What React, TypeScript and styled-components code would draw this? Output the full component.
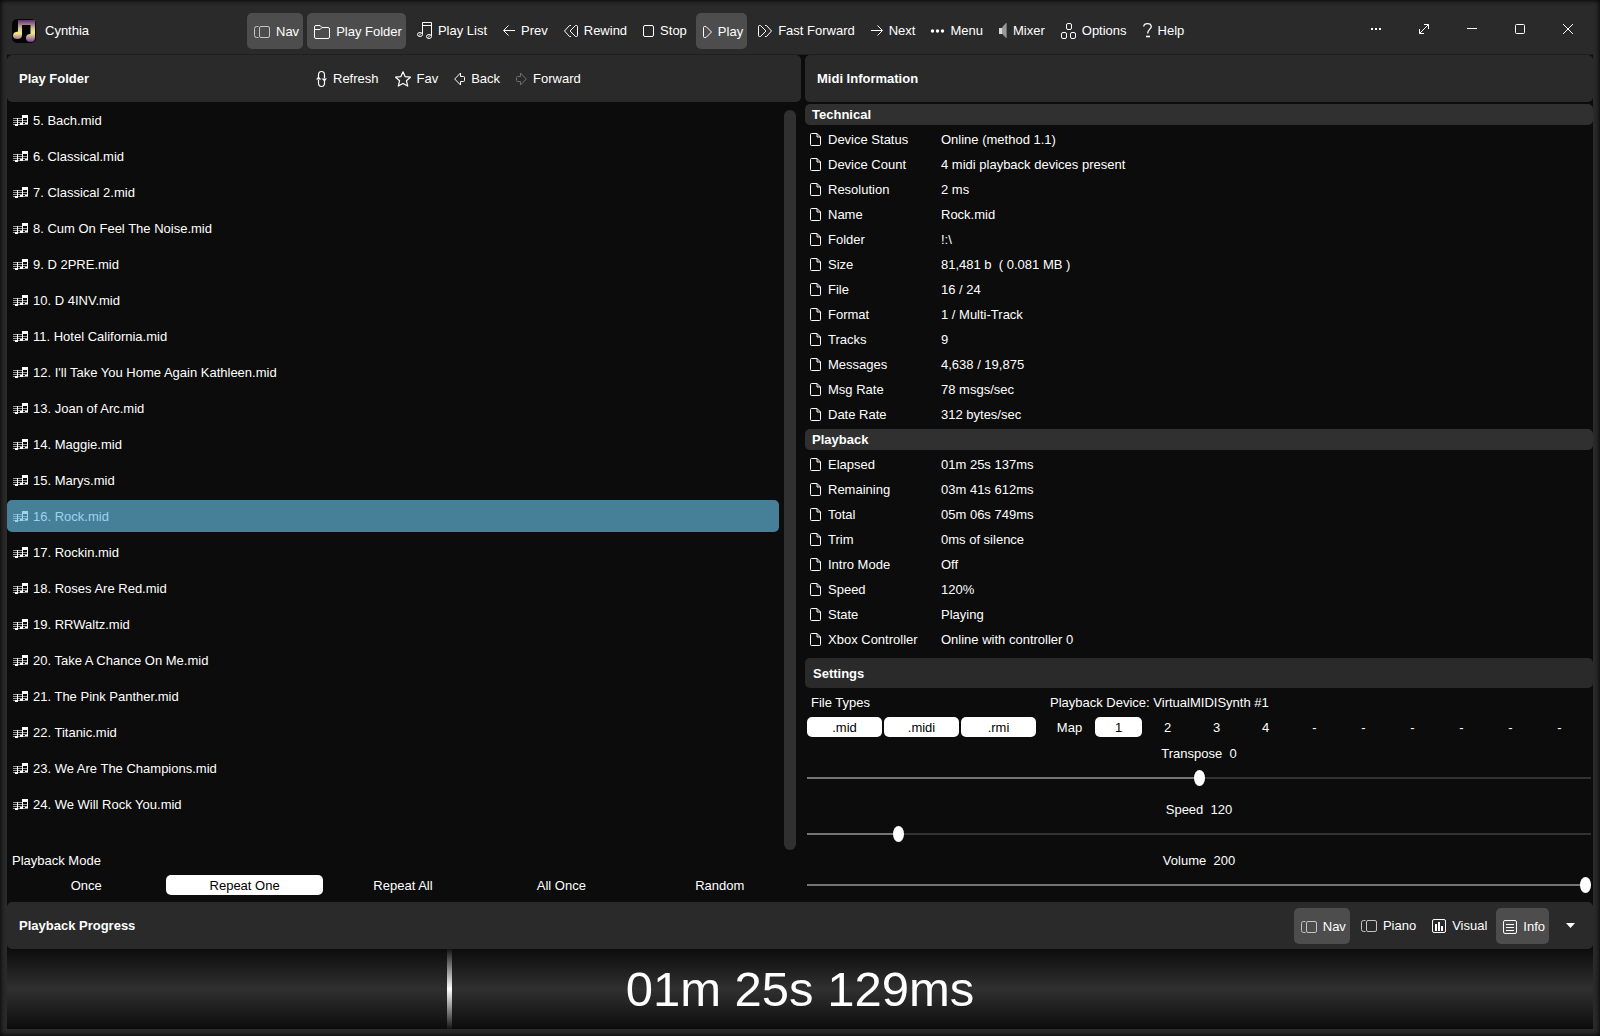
import React, { useState } from "react";
import styled, { createGlobalStyle, css } from "styled-components";

const color = {
  base: "#0c0c0c",
  panel: "#2a2a2a",
  section: "#303030",
  pressed: "#4d4d4d",
  text: "#ffffff",
  accent: "#467f98",
  accentText: "#9fd3ee",
  track: "#323232",
  trackFill: "#757575",
};

const GlobalStyle = createGlobalStyle`
  *, *::before, *::after { box-sizing: border-box; }
  body {
    margin: 0;
    background: ${color.base};
    color: ${color.text};
    font: 13px/20px "Liberation Sans", Arial, sans-serif;
  }
  button, input { font: inherit; color: inherit; }
`;

/* ---------- icons ---------- */

const Glyph = styled.svg`
  display: block;
  flex: none;
  fill: none;
  stroke: currentColor;
  stroke-width: 1;
  overflow: visible;
`;

type IconProps = { w: number; h: number; children: React.ReactNode; crisp?: boolean };
const Icon = ({ w, h, children, crisp }: IconProps) => (
  <Glyph
    width={w}
    height={h}
    viewBox={`0 0 ${w} ${h}`}
    shapeRendering={crisp ? "crispEdges" : undefined}
    aria-hidden="true"
  >
    {children}
  </Glyph>
);

const NavIcon = () => (
  <Icon w={16} h={12}>
    <g stroke="#c4c4c4">
      <path d="M4.500.5H2.500Q.5.5.5 2.500v7q0 2 2 2h2" />
      <rect x="5.500" y=".5" width="10" height="11" rx="1.500" />
    </g>
  </Icon>
);
const FolderIcon = () => (
  <Icon w={16} h={14}>
    <path d="M.5 12V2Q.5.5 2 .5h4L8 2.500h6q1.500 0 1.500 1.500v8q0 1.500-1.500 1.500H2Q.5 13.500.5 12zM.5 4.500h5.500l2-2" />
  </Icon>
);
const NoteIcon = () => (
  <Icon w={15} h={17}>
    <path d="M5.500 12V.5h9V14M5.500 3.500h9" />
    <ellipse cx="3" cy="12.500" rx="2.500" ry="2" />
    <ellipse cx="12" cy="14.500" rx="2.500" ry="2" />
    <path d="M2 13.500l2-2M11 15.500l2-2" />
  </Icon>
);
const PrevIcon = () => (
  <Icon w={12} h={11}>
    <path d="M12 5.500H1M5.500.5l-5 5 5 5" />
  </Icon>
);
const NextIcon = () => (
  <Icon w={12} h={11}>
    <path d="M0 5.500h11M6.500.5l5 5-5 5" />
  </Icon>
);
const RewindIcon = () => (
  <Icon w={14} h={12}>
    <path d="M7 .5H5.500L.5 6l5 5.500H7M11.500.5h1q1 0 1 1v9q0 1-1 1h-1L6 6z" />
  </Icon>
);
const ForwardIcon = () => (
  <Icon w={14} h={12}>
    <path d="M7 .5h1.500l5 5.500-5 5.500H7M2.500.5h-1q-1 0-1 1v9q0 1 1 1h1L8 6z" />
  </Icon>
);
const StopIcon = () => (
  <Icon w={11} h={12}>
    <rect x=".5" y=".5" width="10" height="11" rx="1.500" />
  </Icon>
);
const PlayIcon = () => (
  <Icon w={9} h={12}>
    <path d="M.5 1.500q0-1 1-1h1.500l5.500 5.500-5.500 5.500H1.500q-1 0-1-1z" />
  </Icon>
);
const DotsIcon = () => (
  <Icon w={13} h={4}>
    <g fill="currentColor" stroke="none">
      <circle cx="1.500" cy="2" r="1.700" />
      <circle cx="6.500" cy="2" r="1.700" />
      <circle cx="11.500" cy="2" r="1.700" />
    </g>
  </Icon>
);
const MixerIcon = () => (
  <Icon w={8} h={15}>
    <path d="M0 5h3v6H0z" fill="#d8d8d8" stroke="none" />
    <path d="M3 4.500L7 0v15l-4-4.500z" fill="#9a9a9a" stroke="none" />
    <path d="M7.500 0v15" stroke="#6f6f6f" />
  </Icon>
);
const OptionsIcon = () => (
  <Icon w={15} h={16}>
    <rect x="5.500" y=".5" width="5" height="6" rx="1.500" />
    <rect x=".5" y="9.500" width="5" height="6" rx="1.500" />
    <rect x="9.500" y="9.500" width="5" height="6" rx="1.500" />
  </Icon>
);
const HelpIcon = () => (
  <Icon w={9} h={15}>
    <path d="M.7 3.500Q1 .6 4.500.6T8.300 3.500C8.300 6 4.600 6.500 4.600 10.500" strokeWidth="1.300" />
    <path d="M3 13.500h4" strokeWidth="1.600" />
  </Icon>
);
const RefreshIcon = () => (
  <Icon w={11} h={16}>
    <path d="M2.500 7V4q0-3.500 3-3.500T8.500 4v3M8.500 9v3q0 3.500-3 3.500T2.500 12V9" strokeWidth="1.200" />
    <path d="M5.500 7.500H11l-2.500 3zM0 8.500h5.500l-3-3z" fill="currentColor" stroke="none" />
  </Icon>
);
const StarIcon = () => (
  <Icon w={16} h={16}>
    <path
      d="M8 .8l2.200 4.900 5.200.5-4 3.500 1.300 5.400L8 12.400l-4.700 2.700 1.300-5.400-4-3.500 5.200-.5z"
      strokeWidth="1.200"
      strokeLinejoin="round"
    />
  </Icon>
);
const BackIcon = () => (
  <Icon w={11} h={14}>
    <path d="M.7 7L6.500 1v3.500h3q1 0 1 1v3q0 1-1 1h-3V13z" />
  </Icon>
);
const FwdIcon = () => (
  <Icon w={11} h={14}>
    <path d="M10.300 7L4.500 1v3.500h-3q-1 0-1 1v3q0 1 1 1h3V13z" stroke="#6e6e6e" />
  </Icon>
);
const FileIcon = () => (
  <Icon w={11} h={13}>
    <path d="M.5 1.500q0-1 1-1H7L10.500 4v7.500q0 1-1 1h-8q-1 0-1-1zM7 .5V4h3.500" />
  </Icon>
);
const VisualIcon = () => (
  <Icon w={14} h={14}>
    <rect x=".5" y=".5" width="13" height="13" rx="1.500" />
    <path d="M3 5h2v7H3zM6 3h2v9H6zM9 7h2v5H9z" fill="currentColor" stroke="none" />
  </Icon>
);
const InfoIcon = () => (
  <Icon w={14} h={14}>
    <rect x=".5" y=".5" width="13" height="13" rx="1.500" />
    <path d="M3 4.500h8M3 7.500h8M3 10.500h8" />
  </Icon>
);
const SongIcon = () => (
  <Icon w={15} h={12} crisp>
    <g fill="currentColor" stroke="none">
      <path d="M0 3h9v1H0zM0 5h15v1H0zM0 7h15v1H0zM0 9h15v1H0z" opacity=".6" />
      <path d="M4 3h1v8H2V9h2zM9 0h6v9h-3V8h2V3h-4v7H7V8h2z" />
    </g>
  </Icon>
);

const AppLogo = () => (
  <svg width="24" height="24" viewBox="0 0 24 24" aria-hidden="true">
    <defs>
      <linearGradient id="logo" x1="0" y1="0" x2="0" y2="1">
        <stop offset="0" stopColor="#5f2d78" />
        <stop offset=".4" stopColor="#d9c99a" />
        <stop offset=".6" stopColor="#f4e98a" />
        <stop offset="1" stopColor="#7a3aa0" />
      </linearGradient>
    </defs>
    <rect width="24" height="24" rx="5" fill="#050505" />
    <path
      d="M6 1h17v17.500q0 4.500-4.500 4.500T14 19t4.500-4V6H10v10q0 4-4.500 4T1 16.500 6 12.500z"
      fill="url(#logo)"
    />
  </svg>
);

/* ---------- window frame ---------- */

const Window = styled.div`
  min-height: 100vh;
  display: flex;
  flex-direction: column;
  padding: 0 7px 7px;
  background: ${color.panel};
  box-shadow: inset 0 0 4px 1px #080808;
`;

const TitleBar = styled.header`
  display: flex;
  align-items: center;
  height: 55px;
  padding: 7px 1px 0 5px;
  border-bottom: 1px solid #1f1f1f;
`;

const Brand = styled.h1`
  display: flex;
  align-items: center;
  gap: 9px;
  width: 235px;
  margin: 0;
  font-size: 13px;
  font-weight: 400;
`;

const Tools = styled.nav`
  display: flex;
  align-items: center;
  gap: 4px;
`;

const Tool = styled.button<{ $on?: boolean }>`
  display: flex;
  align-items: center;
  gap: 6px;
  height: 36px;
  padding: 0 5px 0 7px;
  border: 0;
  border-radius: 5px;
  background: transparent;
  white-space: nowrap;
  ${(p) =>
    p.$on &&
    css`
      padding: 2px 4px 0 7px;
      background: ${color.pressed};
    `}
`;

const WindowControls = styled.div`
  display: flex;
  margin-left: auto;
`;

const ControlButton = styled.button`
  display: grid;
  place-items: center;
  width: 48px;
  height: 36px;
  padding: 0 0 4px;
  border: 0;
  background: transparent;
`;

/* ---------- panels ---------- */

const Main = styled.main`
  flex: 1;
  display: grid;
  grid-template-columns: 794fr 788fr;
  gap: 4px;
  background: ${color.base};
`;

const Panel = styled.section`
  display: flex;
  flex-direction: column;
  min-width: 0;
`;

const PanelHeader = styled.div`
  display: flex;
  align-items: center;
  height: 47px;
  padding: 0 12px;
  border-radius: 5px;
  background: ${color.panel};
`;

const PanelTitle = styled.h2<{ $wide?: boolean }>`
  width: ${(p) => (p.$wide ? "290px" : "auto")};
  margin: 0;
  font-size: 13px;
  font-weight: 700;
`;

const ListArea = styled.div`
  flex: 1;
  display: flex;
  gap: 5px;
  padding-right: 5px;
`;

const SongList = styled.ol`
  flex: 1;
  margin: 0;
  padding: 0;
  list-style: none;
`;

const SongItem = styled.li`
  padding: 2px 0;
`;

const Song = styled.button<{ $on: boolean }>`
  display: flex;
  align-items: center;
  gap: 5px;
  width: 100%;
  height: 32px;
  padding: 2px 6px 0;
  border: 0;
  border-radius: 5px;
  background: ${(p) => (p.$on ? color.accent : "transparent")};
  color: ${(p) => (p.$on ? color.accentText : color.text)};
`;

const ScrollThumb = styled.div`
  width: 12px;
  margin-top: 8px;
  border-radius: 6px;
  background: ${color.section};
`;

const Field = styled.fieldset<{ $inset?: boolean }>`
  display: flex;
  flex-direction: column;
  gap: 5px;
  min-width: 0;
  margin: 0;
  padding: ${(p) => (p.$inset ? "0 3px 7px 1px" : "0")};
  border: 0;
`;

const FieldLabel = styled.div`
  height: 20px;
  padding-left: 4px;
  line-height: 22px;
`;

const Choices = styled.div<{ $count: number; $trail?: boolean }>`
  display: grid;
  grid-template-columns: repeat(${(p) => p.$count}, minmax(0, 1fr));
  gap: 2px;
  padding-right: ${(p) => (p.$trail ? "8px" : "0")};
`;

const Choice = styled.label<{ $on: boolean }>`
  position: relative;
  height: 20px;
  border-radius: 5px;
  background: ${(p) => (p.$on ? "#fff" : "transparent")};
  color: ${(p) => (p.$on ? "#000" : color.text)};
  line-height: 22px;
  text-align: center;
`;

const ChoiceInput = styled.input`
  position: absolute;
  inset: 0;
  margin: 0;
  opacity: 0;
`;

/* ---------- midi information ---------- */

const InfoHeading = styled.h3`
  height: 21px;
  margin: 2px 0;
  padding-left: 7px;
  border-radius: 5px;
  background: ${color.section};
  font-size: 13px;
  font-weight: 700;
  line-height: 21px;
`;

const InfoList = styled.dl`
  margin: 0;
`;

const InfoRow = styled.div`
  display: grid;
  grid-template-columns: 113px 1fr;
  align-items: center;
  height: 25px;
  padding-left: 5px;
`;

const InfoTerm = styled.dt`
  display: flex;
  align-items: center;
  gap: 7px;
`;

const InfoValue = styled.dd`
  margin: 0;
  padding-left: 18px;
  white-space: pre;
`;

/* ---------- settings ---------- */

const SettingsHeading = styled.h2`
  height: 30px;
  margin: 6px 0 4px;
  padding-left: 8px;
  border-radius: 5px;
  background: ${color.panel};
  font-size: 13px;
  font-weight: 700;
  line-height: 32px;
`;

const Settings = styled.div`
  padding: 0 2px;
`;

const SettingsRow = styled.div`
  display: grid;
  grid-template-columns: 229fr 545fr;
  gap: 10px;
  margin-bottom: 6px;
`;

const SliderGroup = styled.label<{ $space: number }>`
  display: flex;
  flex-direction: column;
  gap: 7px;
  margin-bottom: ${(p) => p.$space}px;
`;

const SliderText = styled.span`
  height: 20px;
  line-height: 22px;
  text-align: center;
  white-space: pre;
`;

const Range = styled.input`
  appearance: none;
  width: 100%;
  height: 16px;
  margin: 0;
  background: linear-gradient(
      to right,
      ${color.trackFill} var(--fill),
      ${color.track} var(--fill)
    )
    center / 100% 2px no-repeat;
  &::-webkit-slider-thumb {
    appearance: none;
    width: 11px;
    height: 16px;
    border-radius: 50%;
    background: #fff;
  }
`;

/* ---------- progress ---------- */

const BottomTools = styled(Tools)`
  margin-left: auto;
`;

const CaretButton = styled.button`
  display: grid;
  place-items: center;
  width: 34px;
  height: 36px;
  padding: 0;
  border: 0;
  background: transparent;
`;

const BottomBar = styled.div`
  background: ${color.base};
`;

const BottomHeader = styled(PanelHeader)`
  padding-right: 6px;
`;

const Progress = styled.div`
  position: relative;
  display: grid;
  place-items: center;
  height: 80px;
  border-radius: 0 0 5px 5px;
  background: linear-gradient(#0c0c0c, #303030 50%, #0c0c0c);
  font-size: 49px;
  line-height: 80px;
`;

const Marker = styled.div`
  position: absolute;
  top: 0;
  bottom: 0;
  width: 5px;
  background: linear-gradient(#141414, #fff 50%, #141414);
`;

/* ---------- data ---------- */

const songs = [
  "Bach",
  "Classical",
  "Classical 2",
  "Cum On Feel The Noise",
  "D 2PRE",
  "D 4INV",
  "Hotel California",
  "I'll Take You Home Again Kathleen",
  "Joan of Arc",
  "Maggie",
  "Marys",
  "Rock",
  "Rockin",
  "Roses Are Red",
  "RRWaltz",
  "Take A Chance On Me",
  "The Pink Panther",
  "Titanic",
  "We Are The Champions",
  "We Will Rock You",
];

const technical = [
  ["Device Status", "Online (method 1.1)"],
  ["Device Count", "4 midi playback devices present"],
  ["Resolution", "2 ms"],
  ["Name", "Rock.mid"],
  ["Folder", "!:\\"],
  ["Size", "81,481 b  ( 0.081 MB )"],
  ["File", "16 / 24"],
  ["Format", "1 / Multi-Track"],
  ["Tracks", "9"],
  ["Messages", "4,638 / 19,875"],
  ["Msg Rate", "78 msgs/sec"],
  ["Date Rate", "312 bytes/sec"],
];

const playback = [
  ["Elapsed", "01m 25s 137ms"],
  ["Remaining", "03m 41s 612ms"],
  ["Total", "05m 06s 749ms"],
  ["Trim", "0ms of silence"],
  ["Intro Mode", "Off"],
  ["Speed", "120%"],
  ["State", "Playing"],
  ["Xbox Controller", "Online with controller 0"],
];

const modes = ["Once", "Repeat One", "Repeat All", "All Once", "Random"];
const devices = ["Map", "1", "2", "3", "4", "-", "-", "-", "-", "-", "-"];
const fileTypes = [".mid", ".midi", ".rmi"];

type ToolItem = [string, React.ComponentType, boolean?];

const mainTools: ToolItem[] = [
  ["Nav", NavIcon, true],
  ["Play Folder", FolderIcon, true],
  ["Play List", NoteIcon],
  ["Prev", PrevIcon],
  ["Rewind", RewindIcon],
  ["Stop", StopIcon],
  ["Play", PlayIcon, true],
  ["Fast Forward", ForwardIcon],
  ["Next", NextIcon],
  ["Menu", DotsIcon],
  ["Mixer", MixerIcon],
  ["Options", OptionsIcon],
  ["Help", HelpIcon],
];

const folderTools: ToolItem[] = [
  ["Refresh", RefreshIcon],
  ["Fav", StarIcon],
  ["Back", BackIcon],
  ["Forward", FwdIcon],
];

const viewTools: ToolItem[] = [
  ["Nav", NavIcon, true],
  ["Piano", NavIcon],
  ["Visual", VisualIcon],
  ["Info", InfoIcon, true],
];

const ToolButtons = ({ items }: { items: ToolItem[] }) => (
  <>
    {items.map(([label, Pic, on]) => (
      <Tool key={label} type="button" $on={on}>
        <Pic />
        {label}
      </Tool>
    ))}
  </>
);

const InfoSection = ({ title, rows }: { title: string; rows: string[][] }) => (
  <>
    <InfoHeading>{title}</InfoHeading>
    <InfoList>
      {rows.map(([term, value]) => (
        <InfoRow key={term}>
          <InfoTerm>
            <FileIcon />
            {term}
          </InfoTerm>
          <InfoValue>{value}</InfoValue>
        </InfoRow>
      ))}
    </InfoList>
  </>
);

type SliderProps = { name: string; min: number; max: number; start: number; space: number };
const Slider = ({ name, min, max, start, space }: SliderProps) => {
  const [value, setValue] = useState(start);
  const fill = `${((value - min) / (max - min)) * 100}%`;
  return (
    <SliderGroup $space={space}>
      <SliderText>{`${name}  ${value}`}</SliderText>
      <Range
        type="range"
        min={min}
        max={max}
        value={value}
        onChange={(e) => setValue(Number(e.target.value))}
        style={{ "--fill": fill } as React.CSSProperties}
      />
    </SliderGroup>
  );
};

export default function App() {
  const [song, setSong] = useState("Rock");
  const [mode, setMode] = useState("Repeat One");
  const [device, setDevice] = useState(1);
  const [types, setTypes] = useState(fileTypes);
  const elapsed = 85129;
  const total = 306749;

  const toggleType = (t: string) =>
    setTypes((list) => (list.includes(t) ? list.filter((x) => x !== t) : [...list, t]));

  return (
    <Window>
      <GlobalStyle />
      <TitleBar>
        <Brand>
          <AppLogo />
          Cynthia
        </Brand>
        <Tools aria-label="Main">
          <ToolButtons items={mainTools} />
        </Tools>
        <WindowControls>
          <ControlButton type="button" aria-label="More">
            <Icon w={10} h={2} crisp>
              <path d="M0 0h2v2H0zM4 0h2v2H4zM8 0h2v2H8z" fill="currentColor" stroke="none" />
            </Icon>
          </ControlButton>
          <ControlButton type="button" aria-label="Full screen">
            <Icon w={10} h={10}>
              <path d="M.5 9.500l9-9M5 .5h4.500V5M.5 5v4.500H5" />
            </Icon>
          </ControlButton>
          <ControlButton type="button" aria-label="Minimize">
            <Icon w={10} h={1} crisp>
              <path d="M0 .5h10" />
            </Icon>
          </ControlButton>
          <ControlButton type="button" aria-label="Maximize">
            <Icon w={10} h={10}>
              <rect x=".5" y=".5" width="9" height="9" rx="1" />
            </Icon>
          </ControlButton>
          <ControlButton type="button" aria-label="Close">
            <Icon w={10} h={10}>
              <path d="M0 0l10 10M10 0L0 10" />
            </Icon>
          </ControlButton>
        </WindowControls>
      </TitleBar>

      <Main>
        <Panel>
          <PanelHeader>
            <PanelTitle $wide>Play Folder</PanelTitle>
            <Tools aria-label="Folder">
              <ToolButtons items={folderTools} />
            </Tools>
          </PanelHeader>
          <ListArea>
            <SongList start={5}>
              {songs.map((name, i) => (
                <SongItem key={name}>
                  <Song type="button" $on={song === name} onClick={() => setSong(name)}>
                    <SongIcon />
                    {`${i + 5}. ${name}.mid`}
                  </Song>
                </SongItem>
              ))}
            </SongList>
            <ScrollThumb />
          </ListArea>
          <Field $inset aria-label="Playback Mode">
            <FieldLabel>Playback Mode</FieldLabel>
            <Choices $count={5}>
              {modes.map((m) => (
                <Choice key={m} $on={mode === m}>
                  <ChoiceInput
                    type="radio"
                    name="mode"
                    checked={mode === m}
                    onChange={() => setMode(m)}
                  />
                  {m}
                </Choice>
              ))}
            </Choices>
          </Field>
        </Panel>

        <Panel>
          <PanelHeader>
            <PanelTitle>Midi Information</PanelTitle>
          </PanelHeader>
          <InfoSection title="Technical" rows={technical} />
          <InfoSection title="Playback" rows={playback} />
          <SettingsHeading>Settings</SettingsHeading>
          <Settings>
            <SettingsRow>
              <Field aria-label="File Types">
                <FieldLabel>File Types</FieldLabel>
                <Choices $count={3}>
                  {fileTypes.map((t) => (
                    <Choice key={t} $on={types.includes(t)}>
                      <ChoiceInput
                        type="checkbox"
                        checked={types.includes(t)}
                        onChange={() => toggleType(t)}
                      />
                      {t}
                    </Choice>
                  ))}
                </Choices>
              </Field>
              <Field aria-label="Playback Device">
                <FieldLabel>Playback Device: VirtualMIDISynth #1</FieldLabel>
                <Choices $count={11} $trail>
                  {devices.map((d, i) => (
                    <Choice key={i} $on={device === i}>
                      <ChoiceInput
                        type="radio"
                        name="device"
                        checked={device === i}
                        onChange={() => setDevice(i)}
                      />
                      {d}
                    </Choice>
                  ))}
                </Choices>
              </Field>
            </SettingsRow>
            <Slider name="Transpose" min={-127} max={127} start={0} space={13} />
            <Slider name="Speed" min={10} max={1000} start={120} space={8} />
            <Slider name="Volume" min={0} max={200} start={200} space={9} />
          </Settings>
        </Panel>
      </Main>

      <BottomBar>
        <BottomHeader>
          <PanelTitle>Playback Progress</PanelTitle>
          <BottomTools aria-label="View">
            <ToolButtons items={viewTools} />
            <CaretButton type="button" aria-label="More views">
              <Icon w={9} h={5}>
                <path d="M0 0h9L4.500 5z" fill="currentColor" stroke="none" />
              </Icon>
            </CaretButton>
          </BottomTools>
        </BottomHeader>
        <Progress>
          <Marker style={{ left: `${(elapsed / total) * 100}%` }} />
          01m 25s 129ms
        </Progress>
      </BottomBar>
    </Window>
  );
}
